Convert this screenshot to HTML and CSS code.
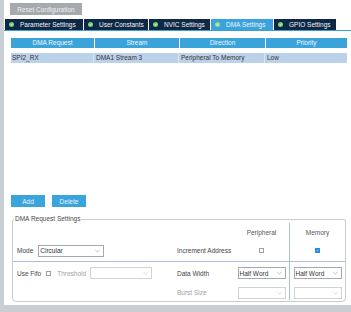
FILE: index.html
```html
<!DOCTYPE html>
<html>
<head>
<meta charset="utf-8">
<link rel="stylesheet" href="styles.css">
</head>
<body>
<div class="app">
  <div class="main">
    <div class="toolbar"><button class="btn-reset">Reset Configuration</button></div>
    <div class="tabs">
      <div class="tab t1"><span class="ok"><svg viewBox="0 0 6 6"><circle cx="3" cy="3" r="3" fill="#6fce7a"/><path d="M1.6 3.1 L2.6 4.1 L4.4 2" stroke="#fff" stroke-width="0.9" fill="none"/></svg></span>Parameter Settings</div>
      <div class="tab t2"><span class="ok"><svg viewBox="0 0 6 6"><circle cx="3" cy="3" r="3" fill="#6fce7a"/><path d="M1.6 3.1 L2.6 4.1 L4.4 2" stroke="#fff" stroke-width="0.9" fill="none"/></svg></span>User Constants</div>
      <div class="tab t3"><span class="ok"><svg viewBox="0 0 6 6"><circle cx="3" cy="3" r="3" fill="#6fce7a"/><path d="M1.6 3.1 L2.6 4.1 L4.4 2" stroke="#fff" stroke-width="0.9" fill="none"/></svg></span>NVIC Settings</div>
      <div class="tab t4 active"><span class="ok"><svg viewBox="0 0 6 6"><circle cx="3" cy="3" r="3" fill="#8fdc8f"/><path d="M1.6 3.1 L2.6 4.1 L4.4 2" stroke="#fff" stroke-width="0.9" fill="none"/></svg></span>DMA Settings</div>
      <div class="tab t5"><span class="ok"><svg viewBox="0 0 6 6"><circle cx="3" cy="3" r="3" fill="#6fce7a"/><path d="M1.6 3.1 L2.6 4.1 L4.4 2" stroke="#fff" stroke-width="0.9" fill="none"/></svg></span>GPIO Settings</div>
    </div>
    <div class="list">
      <div class="thead">
        <div class="th">DMA Request</div>
        <div class="th">Stream</div>
        <div class="th">Direction</div>
        <div class="th">Priority</div>
      </div>
      <div class="trow">
        <div class="td">SPI2_RX</div>
        <div class="td">DMA1 Stream 3</div>
        <div class="td">Peripheral To Memory</div>
        <div class="td">Low</div>
      </div>
    </div>
    <div class="actions">
      <button class="btn">Add</button>
      <button class="btn">Delete</button>
    </div>
    <fieldset class="settings">
      <legend>DMA Request Settings</legend>
      <div class="grid">
        <div class="cell"></div>
        <div class="cell"></div>
        <div class="cell colhead">Peripheral</div>
        <div class="cell colhead mem">Memory</div>

        <div class="cell left sep">
          <span class="lbl">Mode</span>
          <div class="select w-mode"><span>Circular</span><svg class="chev" viewBox="0 0 6 4"><path d="M0.5 0.8 L3 3.2 L5.5 0.8" stroke="#8a9098" stroke-width="0.7" fill="none"/></svg></div>
        </div>
        <div class="cell lbl2 sep">Increment Address</div>
        <div class="cell center sep"><span class="cb"></span></div>
        <div class="cell center mem sep"><span class="cb checked"><svg viewBox="0 0 6 6"><path d="M1.2 3.1 L2.5 4.4 L4.9 1.6" stroke="#fff" stroke-width="1" fill="none"/></svg></span></div>

        <div class="cell left">
          <span class="lbl">Use Fifo</span>
          <span class="cb fifo"></span>
          <span class="lbl dis th-l">Threshold</span>
          <div class="select disabled w-th"><span></span><svg class="chev" viewBox="0 0 6 4"><path d="M0.5 0.8 L3 3.2 L5.5 0.8" stroke="#b8bcc2" stroke-width="0.7" fill="none"/></svg></div>
        </div>
        <div class="cell lbl2">Data Width</div>
        <div class="cell center"><div class="select w-half"><span>Half Word</span><svg class="chev" viewBox="0 0 6 4"><path d="M0.5 0.8 L3 3.2 L5.5 0.8" stroke="#8a9098" stroke-width="0.7" fill="none"/></svg></div></div>
        <div class="cell center mem"><div class="select w-half"><span>Half Word</span><svg class="chev" viewBox="0 0 6 4"><path d="M0.5 0.8 L3 3.2 L5.5 0.8" stroke="#8a9098" stroke-width="0.7" fill="none"/></svg></div></div>

        <div class="cell last"></div>
        <div class="cell lbl2 dis last">Burst Size</div>
        <div class="cell center last"><div class="select disabled w-half"><span></span><svg class="chev" viewBox="0 0 6 4"><path d="M0.5 0.8 L3 3.2 L5.5 0.8" stroke="#b8bcc2" stroke-width="0.7" fill="none"/></svg></div></div>
        <div class="cell center mem last"><div class="select disabled w-half"><span></span><svg class="chev" viewBox="0 0 6 4"><path d="M0.5 0.8 L3 3.2 L5.5 0.8" stroke="#b8bcc2" stroke-width="0.7" fill="none"/></svg></div></div>
      </div>
    </fieldset>
  </div>
</div>
</body>
</html>
```

FILE: styles.css
```css
* { box-sizing: border-box; }
html, body { margin: 0; padding: 0; }
body {
  width: 351px;
  height: 312px;
  overflow: hidden;
  font-family: "Liberation Sans", Arial, sans-serif;
  font-size: 6.5px;
  color: #3c3c3c;
  background: #c9d0d4;
}
.app {
  display: flex;
  height: 312px;
  padding: 0 0 7px 4px;
}
.main {
  flex: 1;
  background: #fff;
  display: flex;
  flex-direction: column;
}
.toolbar { padding: 3px 0 0 6px; height: 19px; }
.btn-reset {
  display: block;
  width: 72px;
  height: 12px;
  padding: 0;
  border: 0;
  background: #a6aaae;
  color: #eef0f2;
  font: inherit;
}
.tabs {
  display: flex;
  gap: 1px;
  padding-left: 1px;
  height: 12px;
  border-bottom: 1px solid #3a9fd8;
}
.tab {
  height: 11px;
  background: #0e2846;
  color: #f2f4f6;
  display: flex;
  align-items: center;
  padding-left: 4px;
  white-space: nowrap;
}
.tab.active { background: #3ba3dc; }
.t1 { width: 78px; }
.t2 { width: 64px; }
.t3 { width: 61px; }
.t4 { width: 62px; }
.t5 { width: 62px; }
.ok { width: 5px; height: 5px; margin-right: 6px; display: flex; }
.ok svg { width: 5px; height: 5px; }

.list {
  height: 164px;
  padding: 7px 4px 0 7px;
}
.thead, .trow {
  display: grid;
  grid-template-columns: 83px 84px 85px 1fr;
  column-gap: 1px;
}
.thead { height: 10px; }
.th {
  background: #3aa3da;
  color: #f0f7fc;
  text-align: center;
  line-height: 10px;
}
.trow {
  margin-top: 5px;
  height: 10px;
  background: #bcd2ea;
}
.td {
  line-height: 10px;
  padding-left: 1px;
  color: #333;
  background: #bcd2ea;
  border-right: 1px solid #d8e4f2;
}
.td:last-child { border-right: 0; }

.actions {
  display: flex;
  gap: 7px;
  padding-left: 7px;
  height: 12px;
}
.btn {
  width: 34px;
  height: 12px;
  padding: 0;
  border: 0;
  background: #3aa5dc;
  color: #eaf4fb;
  font: inherit;
}

.settings {
  margin: 8px 5px 0 8px;
  padding: 0;
  height: 87px;
  border: 1px solid #c9cbcd;
  border-radius: 2px 2px 4px 4px;
  min-width: 0;
}
.settings legend {
  margin-left: 1px;
  padding: 0 1px;
  line-height: 8px;
  color: #4a4a4a;
}
.grid {
  display: grid;
  grid-template-columns: 162px 59px 55px 1fr;
  grid-template-rows: 17px 22px 22px 16px;
}
.cell { display: flex; align-items: center; }
.cell.last { align-items: flex-start; padding-top: 3px; }
.mem { border-left: 1px solid #a9bfdc; }
.sep { border-bottom: 1px solid #a9bfdc; }
.colhead { justify-content: center; align-items: flex-start; padding-top: 6px; color: #555; }
.center { justify-content: center; }
.left { padding-left: 4px; }
.lbl { color: #444; margin-right: 5px; }
.lbl2 { padding-left: 2px; color: #444; }
.cell.lbl2.last { padding-top: 5px; }
.dis { color: #a2a2a2; }
.th-l { margin-left: 6px; margin-right: 4px; }
.select {
  height: 12px;
  border: 1px solid #a3a9b1;
  background: #fff;
  display: flex;
  align-items: center;
  justify-content: space-between;
  padding: 0 3px 0 1px;
  color: #333;
}
.select.disabled { border-color: #cfd3d7; }
.chev { width: 5px; height: 4px; }
.w-mode { width: 66px; }
.w-th { width: 62px; }
.w-half { width: 48px; }
.cb {
  width: 5px;
  height: 5px;
  border: 1px solid #9aa0a6;
  background: #fff;
  display: inline-flex;
}
.cb.checked { background: #2c8ad8; border-color: #2c8ad8; }
.cb.checked svg { width: 100%; height: 100%; }
```
